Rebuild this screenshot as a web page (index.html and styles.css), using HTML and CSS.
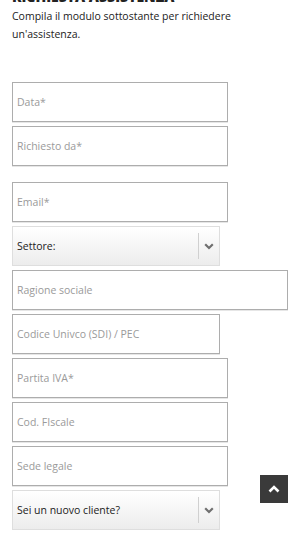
FILE: index.html
```html
<!DOCTYPE html>
<html lang="it">
<head>
<meta charset="utf-8">
<title>Richiesta assistenza</title>
<link rel="stylesheet" href="styles.css">
</head>
<body>
<main class="page">
  <h2 class="title">Richiesta assistenza</h2>
  <p class="intro">Compila il modulo sottostante per richiedere un'assistenza.</p>
  <form class="form">
    <input class="field w-md" type="text" placeholder="Data*">
    <input class="field w-md" type="text" placeholder="Richiesto da*">
    <input class="field w-md field-spaced" type="email" placeholder="Email*">
    <div class="select w-sm">
      <span class="select-label">Settore:</span>
      <span class="select-arrow">
        <svg width="10" height="7" viewBox="0 0 10 7"><polyline points="1.2,1.3 5,5 8.8,1.3" fill="none" stroke="#6f6f6f" stroke-width="2.2"/></svg>
      </span>
    </div>
    <input class="field w-lg" type="text" placeholder="Ragione sociale">
    <input class="field w-sm" type="text" placeholder="Codice Univco (SDI) / PEC">
    <input class="field w-md" type="text" placeholder="Partita IVA*">
    <input class="field w-md" type="text" placeholder="Cod. FIscale">
    <input class="field w-md" type="text" placeholder="Sede legale">
    <div class="select w-sm">
      <span class="select-label">Sei un nuovo cliente?</span>
      <span class="select-arrow">
        <svg width="10" height="7" viewBox="0 0 10 7"><polyline points="1.2,1.3 5,5 8.8,1.3" fill="none" stroke="#6f6f6f" stroke-width="2.2"/></svg>
      </span>
    </div>
  </form>
</main>
<a class="to-top" href="#" aria-label="Torna su">
  <svg width="12" height="8" viewBox="0 0 12 8"><polyline points="1.5,6.5 6,2 10.5,6.5" fill="none" stroke="#fff" stroke-width="2.6"/></svg>
</a>
</body>
</html>
```
FILE: styles.css
```css
* { box-sizing: border-box; }
html, body { margin: 0; padding: 0; background: #fff; }
body {
  font-family: "Open Sans", "Noto Sans", sans-serif;
  color: #222;
  overflow: hidden;
}
.page {
  padding: 0 12px;
}
.title {
  margin: -10px 0 0;
  font-size: 14px;
  line-height: 14px;
  font-weight: 800;
  text-transform: uppercase;
  color: #222;
}
.intro {
  margin: 3px 0 0;
  font-size: 10.5px;
  line-height: 18px;
  color: #222;
  width: 232px;
}
.form {
  margin-top: 39px;
  display: flex;
  flex-direction: column;
  align-items: flex-start;
  gap: 4px;
}
.field {
  display: block;
  height: 40px;
  margin: 0;
  padding: 0 4px;
  border: 1px solid #adadad;
  border-radius: 0;
  background: #fff;
  font-family: inherit;
  font-size: 10.5px;
  color: #333;
  box-shadow: 0 1px 0 #e6e6e6;
  outline: none;
}
.field::placeholder { color: #9a9a9a; }
.field-spaced { margin-top: 12px; }
.w-md { width: 216px; }
.w-sm { width: 208px; }
.w-lg { width: 276px; }
.select {
  display: flex;
  align-items: center;
  height: 40px;
  border: 1px solid #dedede;
  background: linear-gradient(#ffffff, #ececec);
}
.select-label {
  flex: 1;
  padding-left: 4px;
  font-size: 10.5px;
  color: #222;
}
.select-arrow {
  display: flex;
  align-items: center;
  justify-content: center;
  width: 21px;
  height: 26px;
  border-left: 1px solid #d0d0d0;
}
.to-top {
  position: fixed;
  right: 12px;
  bottom: 31px;
  width: 28px;
  height: 28px;
  background: #3a3a3a;
  display: flex;
  align-items: center;
  justify-content: center;
}
```
